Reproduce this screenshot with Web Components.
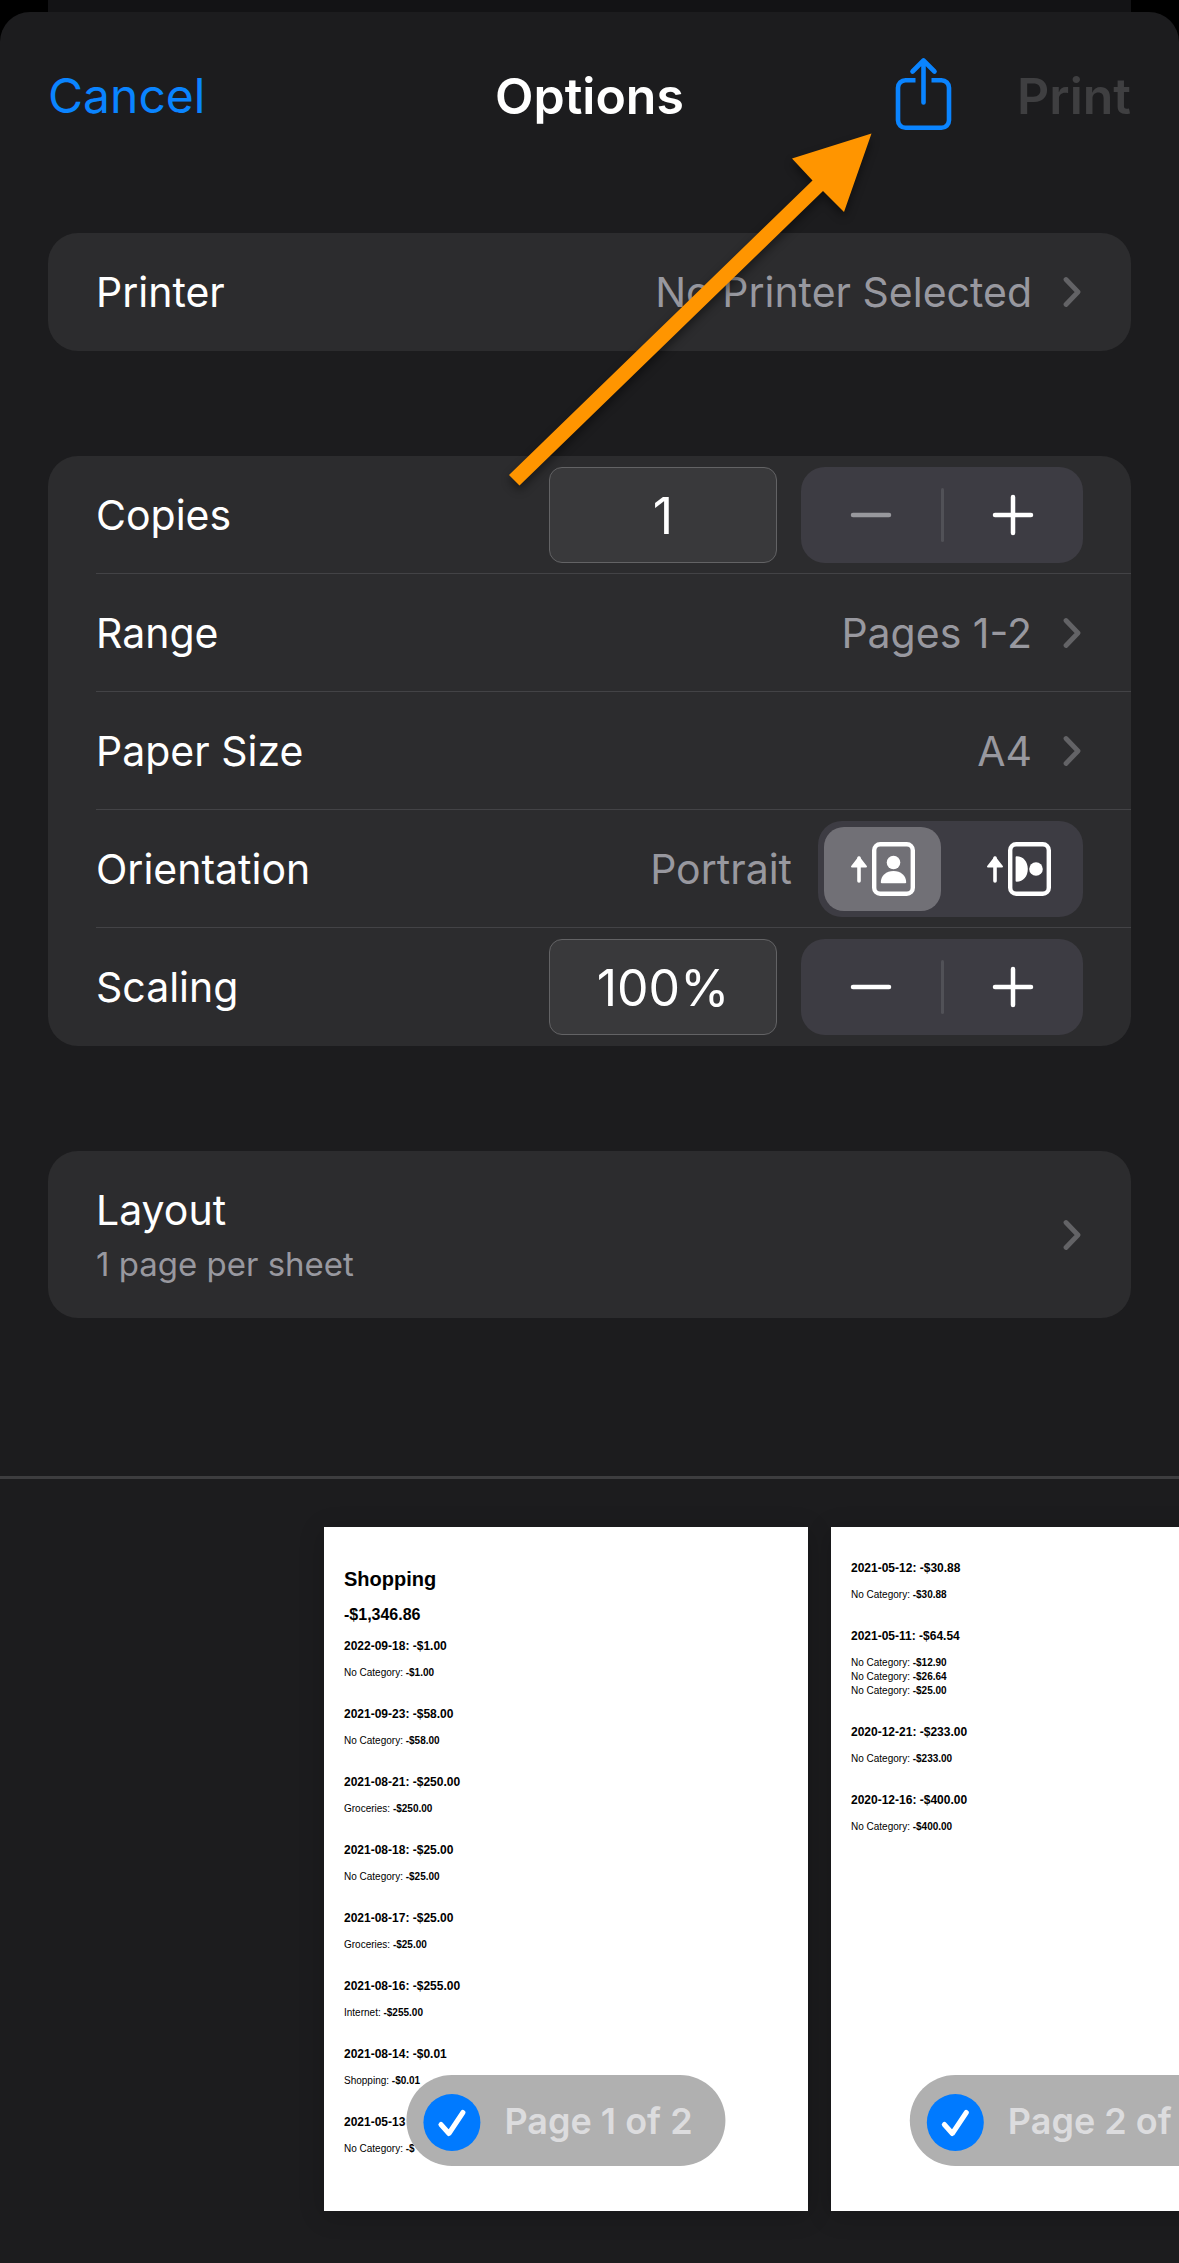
<!DOCTYPE html>
<html lang="en">
<head>
<meta charset="utf-8">
<meta name="viewport" content="width=device-width, initial-scale=1">
<title>Print Options</title>
<style>
  html { background: #000; }
  body { margin: 0; font-family: Inter, "Liberation Sans", sans-serif; color: #fff; }
</style>
</head>
<body>
<print-sheet>
  <sheet-header slot="header" heading="Options"></sheet-header>

  <option-card>
    <option-link label="Printer" value="No Printer Selected"></option-link>
  </option-card>

  <option-card>
    <option-stepper label="Copies" value="1" at-minimum></option-stepper>
    <option-link label="Range" value="Pages 1-2"></option-link>
    <option-link label="Paper Size" value="A4"></option-link>
    <option-orientation label="Orientation" value="Portrait"></option-orientation>
    <option-stepper label="Scaling" value="100%"></option-stepper>
  </option-card>

  <option-card>
    <option-link label="Layout" detail="1 page per sheet"></option-link>
  </option-card>

  <page-strip slot="preview">
    <paper-page name="Page 1 of 2">
      <report-title total="-$1,346.86">Shopping</report-title>
      <report-day day="2022-09-18" total="-$1.00" lines="No Category|-$1.00"></report-day>
      <report-day day="2021-09-23" total="-$58.00" lines="No Category|-$58.00"></report-day>
      <report-day day="2021-08-21" total="-$250.00" lines="Groceries|-$250.00"></report-day>
      <report-day day="2021-08-18" total="-$25.00" lines="No Category|-$25.00"></report-day>
      <report-day day="2021-08-17" total="-$25.00" lines="Groceries|-$25.00"></report-day>
      <report-day day="2021-08-16" total="-$255.00" lines="Internet|-$255.00"></report-day>
      <report-day day="2021-08-14" total="-$0.01" lines="Shopping|-$0.01"></report-day>
      <report-day day="2021-05-13" total="" lines="No Category|-$"></report-day>
    </paper-page>
    <paper-page name="Page 2 of 2">
      <report-day day="2021-05-12" total="-$30.88" lines="No Category|-$30.88"></report-day>
      <report-day day="2021-05-11" total="-$64.54" lines="No Category|-$12.90;No Category|-$26.64;No Category|-$25.00"></report-day>
      <report-day day="2020-12-21" total="-$233.00" lines="No Category|-$233.00"></report-day>
      <report-day day="2020-12-16" total="-$400.00" lines="No Category|-$400.00"></report-day>
    </paper-page>
  </page-strip>
</print-sheet>

<script>
const BASE = `
  * { box-sizing: border-box; }
  button, input { font: inherit; color: inherit; margin: 0; padding: 0; border: 0; background: none; }
  svg { display: block; flex: none; }
`;

function define(name, render) {
  customElements.define(name, class extends HTMLElement {
    connectedCallback() {
      if (this.shadowRoot) return;
      const root = this.attachShadow({ mode: "open" });
      const template = document.createElement("template");
      template.innerHTML = render(attr => this.getAttribute(attr) || "", this);
      root.append(template.content.cloneNode(true));
    }
  });
}

define("print-sheet", () => `
  <style>${BASE}
    :host { display: block; position: relative; }
    .behind { height: 12px; margin: 0 48px; background: #131315; }
    .sheet { background: #1c1c1e; border-radius: 30px 30px 0 0; }
    .options { display: flex; flex-direction: column; gap: 105px; padding: 53px 48px 158px; }
  </style>
  <div class="behind"></div>
  <main class="sheet">
    <slot name="header"></slot>
    <div class="options"><slot></slot></div>
    <slot name="preview"></slot>
  </main>
`);

define("sheet-header", a => `
  <style>${BASE}
    :host { display: block; }
    header { position: relative; display: grid; grid-template-columns: 1fr auto 1fr; align-items: center; height: 168px; padding: 0 48px; font-size: 50px; line-height: 60px; }
    h1 { margin: 0; font-size: inherit; font-weight: 600; }
    .cancel { justify-self: start; font-size: 48px; color: #0a84ff; }
    .actions { justify-self: end; display: flex; align-items: center; gap: 64px; }
    .print { font-weight: 600; color: #3f3f41; }
    .pointer { position: absolute; left: 500px; top: 112px; filter: drop-shadow(0 5px 5px rgba(0,0,0,.45)); pointer-events: none; }
  </style>
  <header>
    <button class="cancel" type="button">Cancel</button>
    <h1>${a("heading")}</h1>
    <div class="actions">
      <button type="button" aria-label="Share">
        <svg width="58" height="84" viewBox="0 0 58 84" fill="none" stroke="#0a84ff" stroke-width="4.6" stroke-linecap="round" stroke-linejoin="round">
          <path d="M20.500 26.300H10.500a7.500 7.500 0 0 0-7.500 7.500V66.200a7.500 7.500 0 0 0 7.500 7.500h36A7.500 7.500 0 0 0 54 66.200V33.800a7.500 7.500 0 0 0-7.500-7.500H36.500" stroke-linecap="butt"/>
          <path d="M28.500 48.500V7M17.500 17.500 28.500 6.500l11 11"/>
        </svg>
      </button>
      <button class="print" type="button" disabled>Print</button>
    </div>
    <svg class="pointer" width="380" height="370" viewBox="0 0 380 370" aria-hidden="true">
      <path fill="#ff9500" d="M371.500 9.500 292 34.500l20.500 22L9 351l10.500 10.500L323 67l21 21z"/>
    </svg>
  </header>
`);

define("option-card", () => `
  <style>${BASE}
    :host { display: block; background: #2c2c2e; border-radius: 30px; }
    ::slotted(:not(:last-child)) { background: linear-gradient(#434346, #434346) 48px 100% / 100% 1px no-repeat; }
  </style>
  <slot></slot>
`);

const ROW = `${BASE}
  :host { display: block; font-size: 41px; line-height: 52px; }
  .row { display: flex; align-items: center; width: 100%; min-height: 118px; padding: 0 48px; text-align: left; }
  .label { flex: 1; }
  .value { color: #98989f; }
`;

define("option-link", a => `
  <style>${ROW}
    .row { cursor: pointer; }
    .detailed { padding-top: 33px; padding-bottom: 33px; }
    .label span { display: block; }
    .detail { margin-top: 7px; font-size: 33px; line-height: 42px; color: #98989f; }
    svg { margin-left: 31px; }
  </style>
  <button type="button" class="row${a("detail") ? " detailed" : ""}">
    <span class="label"><span>${a("label")}</span>${a("detail") ? `<span class="detail">${a("detail")}</span>` : ""}</span>
    <span class="value">${a("value")}</span>
    <svg width="20" height="32" viewBox="0 0 20 32" fill="none" stroke="#636366" stroke-width="4.800" stroke-linecap="round" stroke-linejoin="round"><path d="M3 3.500 15 16 3 28.500"/></svg>
  </button>
`);

define("option-stepper", (a, el) => `
  <style>${ROW}
    .field { width: 228px; height: 96px; padding-top: 2px; border: 1px solid #636365; border-radius: 13px; background: #39393b; font-size: 50px; text-align: center; }
    .stepper { display: flex; align-items: center; width: 282px; height: 96px; margin-left: 24px; border-radius: 24px; background: #3d3c43; }
    .stepper button { flex: 1; height: 96px; display: grid; place-items: center; }
    .stepper button:disabled { color: #98989d; }
    .rule { width: 3px; height: 54px; border-radius: 2px; background: #515157; }
  </style>
  <div class="row">
    <label class="label" for="field">${a("label")}</label>
    <input id="field" class="field" type="text" value="${a("value")}">
    <div class="stepper">
      <button type="button" aria-label="Decrease"${el.hasAttribute("at-minimum") ? " disabled" : ""}>
        <svg width="42" height="42" viewBox="0 0 42 42" stroke="currentColor" stroke-width="4.500" stroke-linecap="round"><path d="M3 21h36"/></svg>
      </button>
      <span class="rule"></span>
      <button type="button" aria-label="Increase">
        <svg width="42" height="42" viewBox="0 0 42 42" stroke="currentColor" stroke-width="4.500" stroke-linecap="round"><path d="M3 21h36M21 3v36"/></svg>
      </button>
    </div>
  </div>
`);

define("option-orientation", a => `
  <style>${ROW}
    .choices { display: flex; gap: 19px; height: 96px; margin-left: 26px; padding: 6px; border-radius: 24px; background: #3d3c43; }
    .choice { position: relative; display: grid; place-items: center; width: 117px; height: 84px; border-radius: 20px; }
    .choice:has(input:checked) { background: #717076; }
    input { position: absolute; inset: 0; width: 100%; height: 100%; opacity: 0; }
  </style>
  <div class="row" role="radiogroup" aria-labelledby="name">
    <span class="label" id="name">${a("label")}</span>
    <span class="value">${a("value")}</span>
    <div class="choices">
      <label class="choice"><input type="radio" name="orientation" aria-label="Portrait" checked>
        <svg width="66" height="56" viewBox="0 0 66 56">
          <path d="M9 17v23" stroke="#fff" stroke-width="3.600" stroke-linecap="round"/><path d="M9 16.500 2 25.500h14z" fill="#fff" stroke="#fff" stroke-width="2" stroke-linejoin="round"/>
          <rect x="24.200" y="3.200" width="38.600" height="49.600" rx="6" fill="none" stroke="#fff" stroke-width="4.400"/>
          <circle cx="43.500" cy="21.500" r="6.800" fill="#fff"/><path d="M30.800 41.500c0-7 5.500-11.500 12.700-11.500s12.700 4.500 12.700 11.500q0 .8-1 .8H31.800q-1 0-1-.8z" fill="#fff"/>
        </svg></label>
      <label class="choice"><input type="radio" name="orientation" aria-label="Landscape">
        <svg width="66" height="56" viewBox="0 0 66 56">
          <path d="M9 17v23" stroke="#fff" stroke-width="3.600" stroke-linecap="round"/><path d="M9 16.500 2 25.500h14z" fill="#fff" stroke="#fff" stroke-width="2" stroke-linejoin="round"/>
          <rect x="24.200" y="3.200" width="38.600" height="49.600" rx="6" fill="none" stroke="#fff" stroke-width="4.400"/>
          <circle cx="50" cy="28" r="6.800" fill="#fff"/><path d="M30.500 15.300c7 0 11.300 5.500 11.300 12.700s-4.300 12.700-11.300 12.700q-.9 0-.9-1V16.300q0-1 .9-1z" fill="#fff"/>
        </svg></label>
    </div>
  </div>
`);

define("page-strip", () => `
  <style>${BASE}
    :host { display: flex; gap: 23px; padding: 48px 0 52px 324px; border-top: 3px solid #3d3d3f; overflow: hidden; }
  </style>
  <slot></slot>
`);

define("paper-page", a => `
  <style>${BASE}
    :host { position: relative; display: block; flex: none; width: 484px; height: 684px; padding: 34px 20px 0; box-sizing: border-box; overflow: visible; background: #fff; color: #000; font-family: "Liberation Sans", sans-serif; box-shadow: 0 4px 24px rgba(0,0,0,.2); }
    .badge { position: absolute; left: 50%; bottom: 45px; transform: translateX(-50%); display: flex; align-items: center; gap: 24px; height: 91px; padding: 0 33px 0 17px; border-radius: 46px; background: #b0b0b0; color: #dcdcde; font: 600 36px/44px Inter, "Liberation Sans", sans-serif; white-space: nowrap; }
    .tick { display: grid; margin-top: 3px; }
    .tick > * { grid-area: 1 / 1; }
    input { appearance: none; width: 57px; height: 57px; border-radius: 50%; background: #fff; }
    input:checked { background: #007aff; }
    .tick svg { pointer-events: none; }
  </style>
  <slot></slot>
  <label class="badge">
    <span class="tick"><input type="checkbox" checked>
      <svg width="57" height="57" viewBox="0 0 57 57" fill="none" stroke="#fff" stroke-width="5" stroke-linecap="round" stroke-linejoin="round"><path d="M17.500 30.500 25.500 39.500 39.500 18.500"/></svg></span>
    <span>${a("name")}</span>
  </label>
`);

define("report-title", a => `
  <style>
    :host { display: block; padding-top: 6px; }
    h1 { margin: 0; font-size: 20px; line-height: 24px; }
    h2 { margin: 14px 0; font-size: 16px; line-height: 20px; }
  </style>
  <h1><slot></slot></h1>
  <h2>${a("total")}</h2>
`);

define("report-day", a => `
  <style>
    :host { display: block; margin-bottom: 27px; }
    h3 { margin: 0 0 13px; font-size: 12px; line-height: 14px; }
    p { margin: 0; font-size: 10px; line-height: 14px; }
  </style>
  <h3>${a("day")}${a("total") ? `: ${a("total")}` : ""}</h3>
  ${a("lines").split(";").map(line => {
    const [category, amount] = line.split("|");
    return `<p>${category}: <b>${amount}</b></p>`;
  }).join("")}
`);
</script>
</body>
</html>
